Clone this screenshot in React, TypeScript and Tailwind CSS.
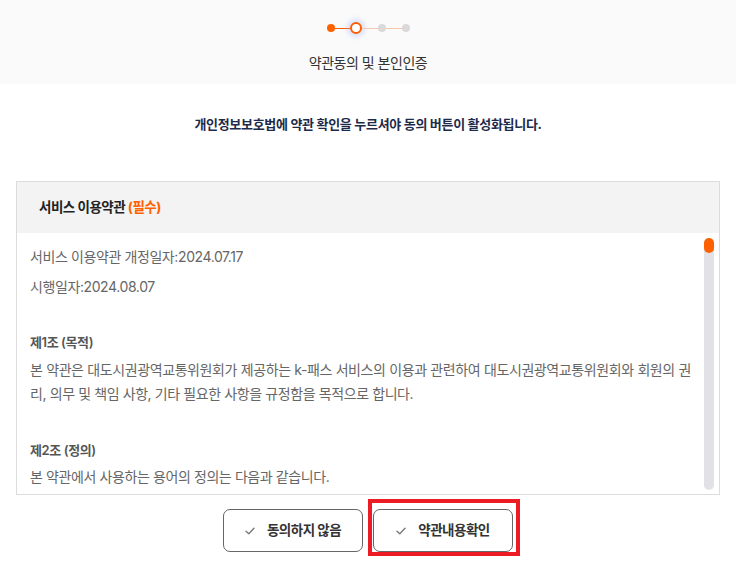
const FONT = "font-['Inter','Noto_Sans_CJK_KR',sans-serif]";

function Check() {
  return (
    <svg width="10" height="8" viewBox="0 0 10 8" fill="none" aria-hidden>
      <path d="M1 4.2 L3.8 6.8 L9 1.2" stroke="#7a7a7a" strokeWidth="1.4" strokeLinecap="round" strokeLinejoin="round" />
    </svg>
  );
}

function Stepper() {
  return (
    <div className="flex items-center">
      <span className="h-2 w-2 rounded-full bg-[#ff6000]" />
      <span className="h-px w-[15px] bg-[#ff6000]" />
      <span className="h-3 w-3 rounded-full border-[2.5px] border-[#ff6000] bg-white shadow-[0_0_5px_3px_rgba(140,160,255,0.3)]" />
      <span className="h-px w-4 bg-[#f6c7ad]" />
      <span className="h-2 w-2 rounded-full bg-[#dadada]" />
      <span className="h-px w-4 bg-[#f6c7ad]" />
      <span className="h-2 w-2 rounded-full bg-[#dadada]" />
    </div>
  );
}

export default function App() {
  return (
    <div className={`${FONT} min-h-screen w-full bg-white tracking-[-0.5px]`}>
      <div className="flex h-[84px] flex-col items-center bg-[#fafafa] pt-[22px]">
        <Stepper />
        <p className="mt-[19px] text-[14px] leading-5 text-[#333]">약관동의 및 본인인증</p>
      </div>

      <p className="mt-[30px] text-center text-[13px] font-bold leading-5 tracking-[-0.3px] text-[#1e2a4a]">
        개인정보보호법에 약관 확인을 누르셔야 동의 버튼이 활성화됩니다.
      </p>

      <div className="mx-4 mt-[47px] border border-[#dcdcdc]">
        <div className="flex h-[51px] items-center bg-[#f3f3f3] px-[22px]">
          <h2 className="text-[13.5px] font-bold text-[#222]">
            서비스 이용약관 <span className="text-[#ff6000]">(필수)</span>
          </h2>
        </div>

        <div className="relative h-[261px] overflow-hidden">
          <div className="pl-[13px] pr-[28px] pt-3 text-[14px] leading-6 tracking-[-0.4px] text-[#666]">
            <p>서비스 이용약관 개정일자:2024.07.17</p>
            <p className="mt-[6px]">시행일자:2024.08.07</p>

            <p className="mt-[31px] text-[13px] font-semibold text-[#555]">제1조 (목적)</p>
            <p className="mt-1">
              <span className="block whitespace-nowrap text-justify [text-align-last:justify]">
                본 약관은 대도시권광역교통위원회가 제공하는 k-패스 서비스의 이용과 관련하여 대도시권광역교통위원회와 회원의 권
              </span>
              <span className="block">리, 의무 및 책임 사항, 기타 필요한 사항을 규정함을 목적으로 합니다.</span>
            </p>

            <p className="mt-[32px] text-[13px] font-semibold text-[#555]">제2조 (정의)</p>
            <p className="mt-[3px]">본 약관에서 사용하는 용어의 정의는 다음과 같습니다.</p>
          </div>

          <div className="absolute bottom-[4px] right-[5px] top-[5px] w-[10px] rounded-full bg-[#e1e1e6]">
            <div className="h-[15px] w-[10px] rounded-full bg-[#ff6000]" />
          </div>
        </div>
      </div>

      <div className="mt-[14px] flex justify-center gap-[10px]">
        <button
          type="button"
          className="flex h-[43px] w-[140px] items-center justify-center gap-3 rounded-[7px] border border-[#666] bg-white text-[13.5px] font-bold text-[#333]"
        >
          <Check />
          <span>동의하지 않음</span>
        </button>
        <div className="relative">
          <button
            type="button"
            className="flex h-[43px] w-[140px] items-center justify-center gap-3 rounded-[7px] border border-[#666] bg-white text-[13.5px] font-bold text-[#333]"
          >
            <Check />
            <span>약관내용확인</span>
          </button>
          <div className="pointer-events-none absolute -bottom-[4px] -left-[5px] -right-[7px] -top-[10px] border-4 border-[#ed1c24]" />
        </div>
      </div>
    </div>
  );
}
